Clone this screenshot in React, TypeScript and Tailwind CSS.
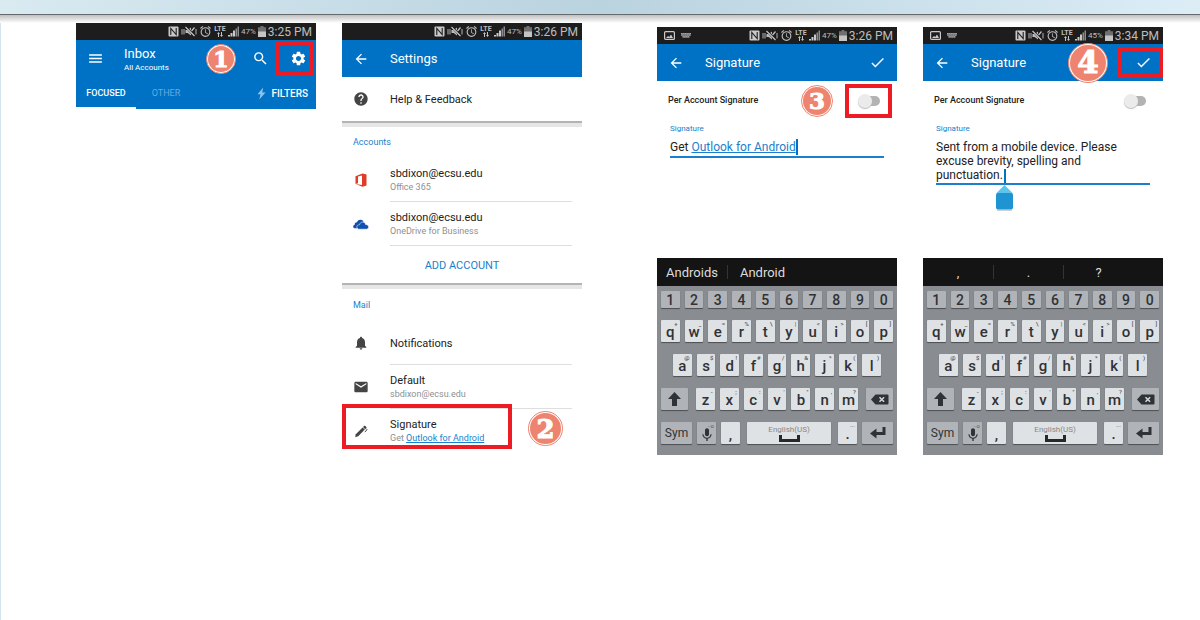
import React from 'react';
import { clsx } from 'clsx';
import {
  MdAlarm,
  MdArrowBack,
  MdCheck,
  MdEmail,
  MdHelp,
  MdMenu,
  MdMic,
  MdNotifications,
  MdSearch,
  MdSettings,
} from 'react-icons/md';

interface KeyDef {
  label: string;
  hint?: string;
}

const numberKeys = ['1', '2', '3', '4', '5', '6', '7', '8', '9', '0'];

const topRow: KeyDef[] = [
  { label: 'q', hint: '+' },
  { label: 'w', hint: '_' },
  { label: 'e', hint: '=' },
  { label: 'r', hint: '%' },
  { label: 't', hint: '\\' },
  { label: 'y', hint: '|' },
  { label: 'u', hint: '<' },
  { label: 'i', hint: '>' },
  { label: 'o', hint: '[' },
  { label: 'p', hint: ']' },
];

const homeRow: KeyDef[] = [
  { label: 'a', hint: '@' },
  { label: 's', hint: '$' },
  { label: 'd', hint: '!' },
  { label: 'f', hint: '#' },
  { label: 'g', hint: '/' },
  { label: 'h', hint: '&' },
  { label: 'j', hint: '*' },
  { label: 'k', hint: '(' },
  { label: 'l', hint: ')' },
];

const bottomRow: KeyDef[] = [
  { label: 'z', hint: '-' },
  { label: 'x', hint: ';' },
  { label: 'c', hint: ':' },
  { label: 'v', hint: "'" },
  { label: 'b', hint: '"' },
  { label: 'n', hint: ',' },
  { label: 'm', hint: '?' },
];

/* ---------- icons ---------- */

const NfcIcon = () => (
  <svg width="11" height="11" viewBox="0 0 11 11" fill="none">
    <rect x="0.5" y="0.5" width="10" height="10" rx="1" fill="#c9c9c9" />
    <path d="M2.8 9V2.500L8.200 8.500V2" stroke="#1d1d1d" strokeWidth="1.1" />
  </svg>
);

const VibrateMuteIcon = () => (
  <svg width="16" height="11" viewBox="0 0 16 11" fill="none">
    <path d="M1 3v5.500M3 3v5.500M15 3v5.500" stroke="#b5b5b5" />
    <path d="M4.500 4h2.200L10 1.500v8L6.700 7H4.500z" fill="#bdbdbd" />
    <path d="M5 1l8.500 9" stroke="#1d1d1d" strokeWidth="2.400" />
    <path d="M4.500 1l9 9M13.500 1.500L10.500 5" stroke="#c4c4c4" strokeWidth="1.200" />
  </svg>
);

const DataArrows = () => (
  <svg width="6" height="5" viewBox="0 0 6 5">
    <path d="M1.5 0L3 2H2v3H1V2H0zM4.500 5L3 3h1V0h1v3h1z" fill="#c4c4c4" />
  </svg>
);

const SignalIcon = () => (
  <svg width="11" height="11" viewBox="0 0 11 11">
    <path d="M0 10.500h2V9H0zM2.500 10.500h2V7h-2zM5 10.500h2V4.500H5z" fill="#c9c9c9" />
    <path d="M7.500 10.500h1.500V2.500H7.500zM9.500 10.500H11V0.500H9.500z" fill="#8d8d8d" />
  </svg>
);

const BatteryIcon = () => (
  <svg width="8" height="11" viewBox="0 0 8 11">
    <path d="M2.500 0h3v1.300H8V11H0V1.300h2.500z" fill="#6f6f6f" />
    <path d="M0 5.500h8V11H0z" fill="#c4c4c4" />
  </svg>
);

const PictureIcon = () => (
  <svg width="11" height="9" viewBox="0 0 11 9" fill="none">
    <rect x="0.600" y="0.600" width="9.800" height="7.800" rx="1" stroke="#c9c9c9" strokeWidth="1.200" />
    <path d="M2 7l2-2 1.300 1L7 3.500 9 7z" fill="#c9c9c9" />
  </svg>
);

const KeyboardIcon = () => (
  <svg width="10" height="5" viewBox="0 0 10 5" fill="none">
    <path d="M0 0h10v3H8.500v2h-7V3H0z" fill="#6a6a6a" />
    <path d="M0 0.500h10M0.500 2h9M1.500 3.700h7" stroke="#b5b5b5" strokeDasharray="1.300 0.500" strokeWidth="0.800" />
  </svg>
);

const BoltIcon = () => (
  <svg width="9" height="13" viewBox="0 0 9 13">
    <path d="M6.200 0.500L0.500 7.200h3L2.300 12.500 8.500 5.600H5.200z" fill="#8fc3ea" />
  </svg>
);

const OfficeIcon = () => (
  <svg width="12" height="14" viewBox="0 0 12 14">
    <path d="M0.500 3.200L7.500 0.400l4 1.200v10.800l-4 1.300-7-2.700 6.500 0.900V2.600L3 3.500v6.700L0.500 11z" fill="#dc3c28" />
  </svg>
);

const OneDriveIcon = () => (
  <svg width="17" height="11" viewBox="0 0 17 11">
    <path
      d="M4 9.500H2.200C0.900 9.500 0.200 8.600 0.200 7.600c0-1 .7-1.700 1.600-1.900C1.800 3.900 3 3.100 4.200 3.200 4.900 1.200 6.500.4 8 .5c1.500 0 2.600.8 3.200 1.900L8 6z"
      fill="#1350ae"
    />
    <path
      d="M6.300 10.500C5 10.500 4.100 9.500 4.100 8.200c0-1.300 1-2.500 2.900-2.500C7.400 3.900 8.700 2.900 10.200 2.900c1.700 0 3 1.100 3.200 2.700 1.800-.1 3.200.9 3.200 2.500 0 1.400-1 2.400-2.400 2.400z"
      fill="#1350ae"
      stroke="#fff"
      strokeWidth="0.600"
    />
  </svg>
);

const PenIcon = () => (
  <svg width="14" height="14" viewBox="0 0 14 14" fill="none">
    <path d="M1.200 13.200l.6-3L8.600 3.400 10.800 5.600 4.200 12.200z" fill="#444" />
    <path d="M9 3l1-1c.4-.4.900-.4 1.300 0l1 1c.4.400.4.900 0 1.300L11.200 5.200z" fill="#444" />
    <path d="M12.200 4.800l.8.900-2.200 2.400" stroke="#444" />
  </svg>
);

const ShiftIcon = () => (
  <svg width="13" height="14" viewBox="0 0 13 14">
    <path d="M6.500 0L13 7H9v7H4V7H0z" fill="#303235" />
  </svg>
);

const DeleteIcon = () => (
  <svg width="18" height="11" viewBox="0 0 18 11" fill="none">
    <path d="M0 5.500L4.500 0.500H16.500a1 1 0 0 1 1 1v8a1 1 0 0 1-1 1H4.500z" fill="#303235" />
    <path d="M8.500 3.200l4.600 4.600M13.100 3.200L8.500 7.800" stroke="#d5d8da" strokeWidth="1.500" />
  </svg>
);

const ReturnIcon = () => (
  <svg width="16" height="12" viewBox="0 0 16 12">
    <path d="M15.500 0v8H6.500v3.500L0 6.500l6.500-5V5H12.500V0z" fill="#303235" />
  </svg>
);

const SpaceIcon = () => (
  <svg width="21" height="7" viewBox="0 0 21 7" fill="none">
    <path d="M1.500 0v5.500h18V0" stroke="#26282a" strokeWidth="3" />
  </svg>
);

/* ---------- shared parts ---------- */

const StepBadge: React.FC<{ step: string; className: string }> = ({ step, className }) => (
  <span className={clsx('shrink-0 rounded-full border border-[#ee836f] bg-white p-px', className)}>
    <span className="flex h-full w-full items-center justify-center rounded-full bg-[#ee836f] font-['DejaVu_Serif',serif] font-bold leading-none text-white [-webkit-text-stroke:1px_white]">
      {step}
    </span>
  </span>
);

interface StatusBarProps {
  time: string;
  battery: string;
  notifications?: boolean;
}

const StatusBar: React.FC<StatusBarProps> = ({ time, battery, notifications }) => (
  <div className="flex h-[17px] items-center bg-[#1d1d1d] pl-[7px] pr-1 text-[#bdbdbd]">
    {notifications && (
      <div className="flex items-center gap-[6px]">
        <PictureIcon />
        <KeyboardIcon />
      </div>
    )}
    <div className="ml-auto flex items-center gap-[2px]">
      <NfcIcon />
      <VibrateMuteIcon />
      <MdAlarm size={13} />
      <div className="flex w-3 flex-col items-center">
        <span className="text-[7px] font-bold leading-[6px]">LTE</span>
        <DataArrows />
      </div>
      <SignalIcon />
      <span className="text-[8px] leading-none">{battery}</span>
      <BatteryIcon />
      <span className="text-[12px] leading-4">{time}</span>
    </div>
  </div>
);

const Divider = () => <div className="h-[6px] border-t-2 border-[#b4b4b4] bg-[#e6e6e6]" />;

/* ---------- inbox ---------- */

const InboxScreen = () => (
  <section className="min-w-0 flex-1">
    <StatusBar time="3:25 PM" battery="47%" />
    <div className="bg-[#0072c6] text-white">
      <div className="flex h-[37px] items-center pl-[11px] pr-[2px]">
        <button aria-label="Menu" className="mr-5">
          <MdMenu size={17} />
        </button>
        <div className="pt-px">
          <h2 className="text-[13px] leading-[17px]">Inbox</h2>
          <p className="text-[8px] leading-[11px]">All Accounts</p>
        </div>
        <StepBadge step="1" className="ml-auto h-[30px] w-[30px] text-[22px]" />
        <button aria-label="Search" className="ml-4 mr-[6px]">
          <MdSearch size={17} />
        </button>
        <button
          aria-label="Settings"
          className="flex h-[35px] w-[39px] items-center justify-center border-4 border-[#ed1c24] pl-[7px]"
        >
          <MdSettings size={17} />
        </button>
      </div>
      <div className="flex h-8 text-[9px]">
        <button className="w-1/4 border-b-2 border-white pt-[3px] font-medium">FOCUSED</button>
        <button className="w-1/4 border-b-2 border-[#0072c6] pt-[3px] text-[#66aadd]">OTHER</button>
        <button className="ml-auto flex items-center gap-[5px] pr-2 text-[10px] font-medium">
          <BoltIcon />
          FILTERS
        </button>
      </div>
    </div>
  </section>
);

/* ---------- settings ---------- */

interface SettingRowProps {
  icon: React.ReactNode;
  title: string;
  detail?: React.ReactNode;
  last?: boolean;
  children?: React.ReactNode;
}

const SettingRow: React.FC<SettingRowProps> = ({ icon, title, detail, last, children }) => (
  <li className="relative flex h-11 items-center pr-[10px]">
    <div className="flex w-12 shrink-0 pl-[11px]">
      <span className="flex w-4 justify-center text-[#444]">{icon}</span>
    </div>
    <div
      className={clsx(
        'flex h-full flex-1 flex-col justify-center border-b pt-[2px]',
        last ? 'border-white' : 'border-[#dedede]'
      )}
    >
      <p className="text-[11px] leading-[14px] text-[#222]">{title}</p>
      {detail && <p className="text-[9px] leading-[13px] text-[#8f8f8f]">{detail}</p>}
    </div>
    {children}
  </li>
);

const SettingsScreen = () => (
  <section className="min-w-0 flex-1">
    <StatusBar time="3:26 PM" battery="47%" />
    <header className="flex h-[37px] items-center bg-[#0072c6] pl-[11px] text-white">
      <button aria-label="Back" className="w-[37px]">
        <MdArrowBack size={16} />
      </button>
      <h2 className="text-[13px]">Settings</h2>
    </header>
    <ul>
      <SettingRow icon={<MdHelp size={16} />} title="Help & Feedback" last />
    </ul>
    <Divider />
    <h3 className="px-[11px] pb-[9px] pt-2 text-[9px] leading-[14px] text-[#1a7fcc]">Accounts</h3>
    <ul>
      <SettingRow icon={<OfficeIcon />} title="sbdixon@ecsu.edu" detail="Office 365" />
      <SettingRow icon={<OneDriveIcon />} title="sbdixon@ecsu.edu" detail="OneDrive for Business" />
    </ul>
    <button className="block h-[37px] w-full pt-[3px] text-[11px] text-[#1a7fcc]">ADD ACCOUNT</button>
    <Divider />
    <h3 className="px-[11px] py-[9px] text-[9px] leading-[14px] text-[#1a7fcc]">Mail</h3>
    <ul>
      <SettingRow icon={<MdNotifications size={16} />} title="Notifications" />
      <SettingRow icon={<MdEmail size={16} />} title="Default" detail="sbdixon@ecsu.edu" />
      <SettingRow
        icon={<PenIcon />}
        title="Signature"
        detail={
          <>
            Get{' '}
            <a href="#outlook" className="text-[#1a7fcc] underline">
              Outlook for Android
            </a>
          </>
        }
        last
      >
        <span className="absolute -top-[5px] left-0 h-[45px] w-[170px] border-4 border-[#ed1c24]" />
        <StepBadge step="2" className="absolute right-[19px] top-[2px] h-[35px] w-[35px] text-[26px]" />
      </SettingRow>
    </ul>
  </section>
);

/* ---------- keyboard ---------- */

interface KeyProps {
  label?: string;
  hint?: string;
  dark?: boolean;
  className?: string;
  children?: React.ReactNode;
}

const Key: React.FC<KeyProps> = ({ label, hint, dark, className, children }) => (
  <button
    aria-label={label}
    className={clsx(
      'relative flex min-w-0 items-center justify-center rounded-[1px] text-[#303235] shadow-[0_1px_1px_#4c4f52]',
      dark ? 'bg-[#b0b4b8]' : 'bg-[#dfe2e5]',
      className
    )}
  >
    {children}
    {hint && <span className="absolute right-[2px] top-0 text-[6px] leading-[7px] text-[#555]">{hint}</span>}
  </button>
);

const LetterKey: React.FC<KeyDef> = ({ label, hint }) => (
  <Key label={label} hint={hint} className="h-[22px] flex-1 pt-[3px] text-[15px] font-medium leading-none">
    {label}
  </Key>
);

const Keyboard: React.FC<{ suggestions: string[] }> = ({ suggestions }) => (
  <div>
    <div className="flex h-7 bg-[#141414] pr-[30px] text-[13px] text-[#dcdcdc]">
      {suggestions.map((word, idx) => (
        <div key={idx} className="flex flex-1 items-center">
          {idx > 0 && word && <span className="h-[14px] w-px bg-[#333]" />}
          {word && <button className="flex-1 pt-[2px]">{word}</button>}
        </div>
      ))}
    </div>
    <div className="flex flex-col gap-3 bg-[#898d92] px-1 pb-[11px] pt-[5px]">
      <div className="flex gap-[5px]">
        {numberKeys.map((n) => (
          <Key key={n} label={n} dark className="h-[17px] flex-1 text-[14px] font-medium leading-none">
            {n}
          </Key>
        ))}
      </div>
      <div className="flex gap-[5px]">
        {topRow.map((k) => (
          <LetterKey key={k.label} {...k} />
        ))}
      </div>
      <div className="flex gap-[5px] px-3">
        {homeRow.map((k) => (
          <LetterKey key={k.label} {...k} />
        ))}
      </div>
      <div className="flex gap-2">
        <Key label="Shift" dark className="w-[27px]">
          <ShiftIcon />
        </Key>
        <div className="flex flex-1 gap-[5px]">
          {bottomRow.map((k) => (
            <LetterKey key={k.label} {...k} />
          ))}
        </div>
        <Key label="Delete" dark className="w-[27px]">
          <DeleteIcon />
        </Key>
      </div>
      <div className="flex h-[22px] gap-[5px]">
        <Key label="Symbols" dark className="w-[31px] text-[12px]">
          Sym
        </Key>
        <Key label="Voice input" hint="··o" dark className="w-[19px] pt-1">
          <MdMic size={16} />
        </Key>
        <Key label="Comma" className="w-[19px] pt-1 text-[15px] font-medium">
          ,
        </Key>
        <Key label="Space" className="mx-[2px] flex-1 flex-col">
          <span className="text-[8px] leading-[10px] text-[#85888b]">English(US)</span>
          <SpaceIcon />
        </Key>
        <Key label="Period" hint="···" className="w-[19px] pt-[2px] text-[15px] font-medium">
          .
        </Key>
        <Key label="Enter" dark className="w-[31px]">
          <ReturnIcon />
        </Key>
      </div>
    </div>
  </div>
);

/* ---------- signature ---------- */

interface SignatureScreenProps {
  id: string;
  time: string;
  battery: string;
  suggestions: string[];
  headerStep?: string;
  toggleStep?: string;
  children: React.ReactNode;
}

const SignatureScreen: React.FC<SignatureScreenProps> = ({
  id,
  time,
  battery,
  suggestions,
  headerStep,
  toggleStep,
  children,
}) => (
  <section className="min-w-0 flex-1 pt-1">
    <StatusBar time={time} battery={battery} notifications />
    <header className="flex h-[37px] items-center bg-[#0072c6] pl-[11px] text-white">
      <button aria-label="Back" className="w-[37px]">
        <MdArrowBack size={16} />
      </button>
      <h2 className="text-[13px]">Signature</h2>
      {headerStep && <StepBadge step={headerStep} className="ml-auto h-10 w-10 text-[31px]" />}
      <button
        aria-label="Save"
        className={clsx(
          'flex h-[31px] w-[46px] items-center justify-center pl-[7px]',
          headerStep ? 'ml-[9px] border-4 border-[#ed1c24]' : 'ml-auto'
        )}
      >
        <MdCheck size={17} />
      </button>
    </header>
    <div className="min-h-[177px]">
      <div className="flex h-[39px] items-center pl-[11px] pr-[5px]">
        <label htmlFor={`${id}-switch`} className="text-[9px] font-medium text-[#222]">
          Per Account Signature
        </label>
        {toggleStep && <StepBadge step={toggleStep} className="ml-auto h-8 w-8 text-[23px]" />}
        <span
          className={clsx(
            'flex h-[34px] w-[47px] items-center justify-center border-4 pl-[5px]',
            toggleStep ? 'ml-3 border-[#ed1c24]' : 'ml-auto border-white'
          )}
        >
          <input
            id={`${id}-switch`}
            type="checkbox"
            role="switch"
            className="relative h-[10px] w-[18px] appearance-none rounded-full bg-[#b3b3b3] before:absolute before:-left-1 before:-top-[2px] before:h-[14px] before:w-[14px] before:rounded-full before:bg-[#ebebeb] before:shadow-[0_1px_1px_#bbb]"
          />
        </span>
      </div>
      <div className="px-[13px] pt-[3px]">
        <label id={`${id}-label`} htmlFor={`${id}-text`} className="block text-[8px] leading-3 text-[#1a7fcc]">
          Signature
        </label>
        {children}
      </div>
    </div>
    <Keyboard suggestions={suggestions} />
  </section>
);

const App = () => (
  <div className="flex min-h-screen flex-col bg-white font-[Roboto,'Liberation_Sans',sans-serif]">
    <div className="h-[14px] bg-linear-to-r from-[#d9eaf1] via-[#b9d3df] to-[#dcedf6]" />
    <div className="h-[9px] border-t border-[#66696c] bg-linear-to-b from-[#c0c0c0] to-white" />
    <main className="flex flex-1 items-start gap-[75px] border-l border-[#d3e4ec] pl-[75px] pr-[37px]">
      <div className="flex flex-1 items-start gap-[26px]">
        <InboxScreen />
        <SettingsScreen />
      </div>
      <div className="flex flex-1 items-start gap-[26px]">
        <SignatureScreen
          id="initial"
          time="3:26 PM"
          battery="47%"
          suggestions={['Androids', 'Android', '']}
          toggleStep="3"
        >
          <div
            id="initial-text"
            role="textbox"
            aria-labelledby="initial-label"
            contentEditable
            suppressContentEditableWarning
            className="mt-1 flex border-b-2 border-[#1a7fcc] pb-px text-[12px] leading-4 text-[#222]"
          >
            <span className="whitespace-pre">Get </span>
            <a href="#outlook" className="text-[#1a7fcc] underline">
              Outlook for Android
            </a>
            <span className="w-[2px] bg-[#0072c6]" />
          </div>
        </SignatureScreen>
        <SignatureScreen
          id="edited"
          time="3:34 PM"
          battery="45%"
          suggestions={[',', '.', '?']}
          headerStep="4"
        >
          <div className="relative mt-[5px]">
            <textarea
              id="edited-text"
              rows={3}
              defaultValue="Sent from a mobile device. Please excuse brevity, spelling and punctuation."
              className="block w-full resize-none overflow-hidden border-b-2 border-[#1a7fcc] pb-px text-[12px] leading-[14px] text-[#222] outline-none"
            />
            {/* caret with its drag handle */}
            <span className="absolute left-[68px] top-[29px] h-[14px] w-[2px] bg-[#0072c6]" />
            <svg className="absolute left-[59px] top-[45px]" width="19" height="26" viewBox="0 0 19 26">
              <path d="M9.500 0l8.500 8.500H1z" fill="#5cc5ee" />
              <rect x="1" y="8" width="17" height="16.500" rx="2" fill="#1e94d2" />
              <path d="M2 25h15" stroke="#9aa5ab" strokeWidth="1" />
            </svg>
          </div>
        </SignatureScreen>
      </div>
    </main>
  </div>
);

export default App;
